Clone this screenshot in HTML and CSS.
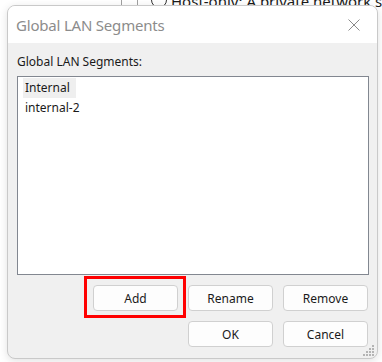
FILE: index.html
```html
<!DOCTYPE html>
<html lang="en">
<head>
    <meta charset="UTF-8">
    <meta name="viewport" content="width=device-width, initial-scale=1.0">
    <title>Global LAN Segments</title>
    <link rel="stylesheet" href="styles.css">
</head>
<body>

    <div class="backdrop">
        <div class="backdrop-row">
            <span class="rule rule-a"></span>
            <span class="rule rule-b"></span>
            <span class="radio"></span>
            <span class="backdrop-text">Host-only: A private network shared with the host</span>
        </div>
    </div>

    <div class="dialog">
        <div class="titlebar">
            <span class="title">Global LAN Segments</span>
            <button class="close" aria-label="Close">
                <svg width="12" height="12" viewBox="0 0 12 12">
                    <path d="M0.5 0.5 L11.5 11.5 M11.5 0.5 L0.5 11.5" stroke="#8a8a8a" stroke-width="1" fill="none"/>
                </svg>
            </button>
        </div>

        <div class="content">
            <p class="list-label">Global LAN Segments:</p>

            <ul class="segment-list">
                <li class="selected">Internal</li>
                <li>internal-2</li>
            </ul>

            <div class="button-row">
                <div class="marked">
                    <button class="btn">Add</button>
                    <span class="mark"></span>
                </div>
                <button class="btn">Rename</button>
                <button class="btn">Remove</button>
            </div>

            <div class="button-row">
                <button class="btn">OK</button>
                <button class="btn">Cancel</button>
            </div>
        </div>

        <svg class="grip" width="12" height="11" viewBox="0 0 12 11">
            <rect x="9" y="0" width="2" height="2" fill="#b4b4b4"/>
            <rect x="6" y="3" width="2" height="2" fill="#b4b4b4"/>
            <rect x="9" y="3" width="2" height="2" fill="#b4b4b4"/>
            <rect x="3" y="6" width="2" height="2" fill="#b4b4b4"/>
            <rect x="6" y="6" width="2" height="2" fill="#b4b4b4"/>
            <rect x="9" y="6" width="2" height="2" fill="#b4b4b4"/>
            <rect x="0" y="9" width="2" height="2" fill="#b4b4b4"/>
            <rect x="3" y="9" width="2" height="2" fill="#b4b4b4"/>
            <rect x="6" y="9" width="2" height="2" fill="#b4b4b4"/>
            <rect x="9" y="9" width="2" height="2" fill="#b4b4b4"/>
        </svg>
    </div>

</body>
</html>
```

FILE: styles.css
```css
:root {
    --dialog-bg: #f0f0f0;
    --border-color: #c9c9c9;
    --list-border: #828790;
    --button-border: #d0d0d0;
    --text-color: #1a1a1a;
    --title-color: #8c8c8c;
    --mark-color: #ff0000;
}

body {
    margin: 0;
    background-color: #f3f3f3;
    font-family: 'Noto Sans', 'Open Sans', sans-serif;
    color: var(--text-color);
    width: 382px;
    height: 362px;
    overflow: hidden;
    position: relative;
}

/* window behind the dialog, only its lower edge peeks out */
.backdrop {
    height: 362px;
    background-color: #ffffff;
}

.backdrop-row {
    display: flex;
    align-items: flex-end;
    height: 9px;
    overflow: hidden;
}

.rule {
    flex: none;
    width: 1px;
    height: 14px;
    background-color: #a0a0a0;
}

.rule-a {
    margin-left: 121px;
}

.rule-b {
    margin-left: 15px;
}

.radio {
    flex: none;
    width: 14px;
    height: 14px;
    border: 1px solid #333;
    border-radius: 50%;
    margin-left: 13px;
    margin-bottom: 1px;
}

.backdrop-text {
    flex: none;
    margin-left: 4px;
    font-size: 15px;
    line-height: 16px;
    color: #1a1a1a;
    white-space: nowrap;
}

.dialog {
    position: absolute;
    left: 7px;
    top: 5px;
    width: 369px;
    height: 352px;
    border: 1px solid var(--border-color);
    border-radius: 8px;
    background-color: var(--dialog-bg);
    box-shadow: 0 2px 8px rgba(0, 0, 0, 0.12);
    overflow: hidden;
}

.titlebar {
    height: 37px;
    background-color: #fff;
    display: flex;
    align-items: center;
    justify-content: space-between;
    padding-left: 8px;
}

.title {
    font-size: 15px;
    color: var(--title-color);
    letter-spacing: -0.2px;
}

.close {
    background: none;
    border: none;
    width: 46px;
    height: 37px;
    padding: 0;
    display: flex;
    align-items: center;
    justify-content: center;
}

.content {
    padding: 11px 8px 0 9px;
}

.list-label {
    margin: 0;
    font-size: 12px;
    line-height: 16px;
}

.segment-list {
    list-style: none;
    margin: 6px 0 0;
    padding: 1px 0 0 5px;
    height: 196px;
    background-color: #fff;
    border: 1px solid var(--list-border);
    font-size: 12px;
}

.segment-list li {
    display: table;
    height: 20px;
    line-height: 20px;
    padding: 0 6px 0 2px;
}

.segment-list li.selected {
    background-color: #efefef;
}

.button-row {
    display: flex;
    justify-content: flex-end;
    gap: 10px;
    margin-top: 10px;
    padding-right: 1px;
}

.btn {
    width: 85px;
    height: 26px;
    background-color: #fdfdfd;
    border: 1px solid var(--button-border);
    border-radius: 4px;
    font-family: inherit;
    font-size: 12px;
    color: var(--text-color);
    padding: 0;
}

.marked {
    position: relative;
    display: flex;
}

/* red annotation frame drawn over the Add button */
.mark {
    position: absolute;
    left: -9px;
    top: -9px;
    width: 96px;
    height: 36px;
    border: 3px solid var(--mark-color);
}

.grip {
    position: absolute;
    right: 2px;
    bottom: 2px;
}
```
